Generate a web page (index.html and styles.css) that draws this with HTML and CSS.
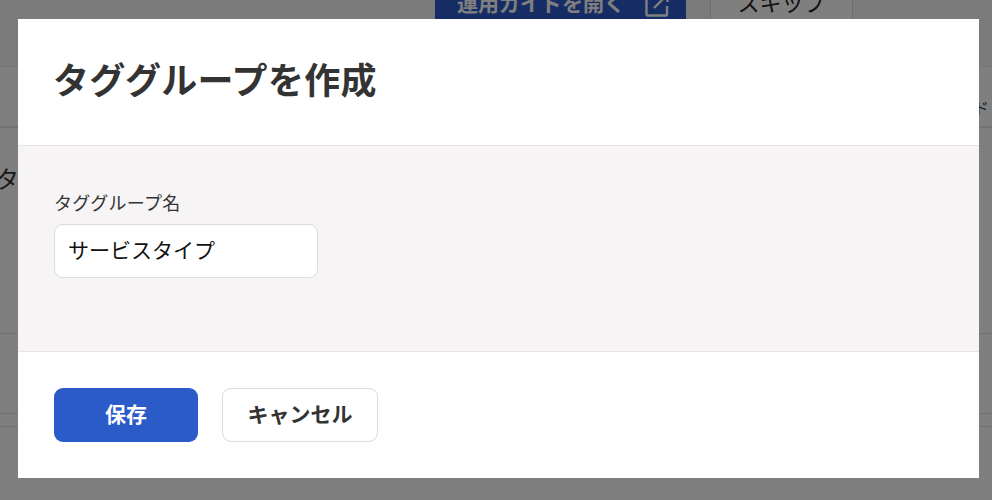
FILE: index.html
```html
<!DOCTYPE html>
<html lang="ja">
<head>
  <meta charset="UTF-8">
  <title>タググループを作成</title>
  <link rel="stylesheet" href="styles.css">
</head>
<body>
  <div class="page">
    <div class="topbar">
      <a class="guide-btn">運用ガイドを開く
        <svg width="24" height="24" viewBox="0 0 24 24" fill="none" stroke="currentColor" stroke-width="2.4">
          <path d="M11 2H2.500a1 1 0 0 0-1 1v18.500a1 1 0 0 0 1 1H21a1 1 0 0 0 1-1V13"/>
          <path d="M9 15 21 3M15 1.500h7.500V9"/>
        </svg>
      </a>
      <a class="skip-btn">スキップ</a>
    </div>
    <div class="tabs"><span class="tabs-end">ド</span></div>
    <div class="row row-first">タ</div>
    <div class="row row-second"></div>
    <div class="row row-third"></div>
  </div>

  <div class="overlay">
    <div class="modal">
      <div class="modal-head">
        <h2>タググループを作成</h2>
      </div>
      <div class="modal-body">
        <label for="groupName">タググループ名</label>
        <input type="text" id="groupName" value="サービスタイプ">
      </div>
      <div class="modal-foot">
        <button class="btn btn-save">保存</button>
        <button class="btn btn-cancel">キャンセル</button>
      </div>
    </div>
  </div>
</body>
</html>
```

FILE: styles.css
```css
* {
  box-sizing: border-box;
}
html, body {
  height: 100%;
}
body {
  margin: 0;
  overflow: hidden;
  background: #fff;
  font-family: "Noto Sans CJK JP", "Noto Sans", sans-serif;
  color: #333;
}
.page {
  height: 500px;
  overflow: hidden;
}
.topbar {
  height: 66px;
  background: #f6f6f6;
  display: flex;
  align-items: flex-end;
  padding: 0 139px 0 435px;
  gap: 24px;
}
.guide-btn {
  width: 251px;
  height: 86px;
  margin-bottom: 20px;
  background: #2a5bc9;
  color: #fff;
  border-radius: 6px;
  font-size: 21px;
  line-height: 30px;
  font-weight: 700;
  display: flex;
  align-items: flex-end;
  justify-content: center;
  gap: 20px;
  padding: 0 0 29px 5px;
}
.skip-btn {
  width: 143px;
  height: 86px;
  margin-bottom: 20px;
  border: 1px solid #ddd;
  border-radius: 6px;
  background: #fff;
  color: #222;
  font-size: 22px;
  line-height: 30px;
  display: flex;
  align-items: flex-end;
  justify-content: center;
  padding-bottom: 29px;
}
.tabs {
  height: 62px;
  background: #fff;
  border-top: 1px solid #eee;
  border-bottom: 2px solid #e4e4e4;
  display: flex;
  align-items: flex-end;
  justify-content: flex-end;
  font-size: 16px;
  line-height: 20px;
  padding: 0 3px 9px 0;
}
.row {
  border-bottom: 1px solid #e4e4e4;
}
.row-first {
  height: 206px;
  padding: 32px 0 0 0;
  margin-left: -5px;
  font-size: 24px;
}
.row-second {
  height: 80px;
}
.row-third {
  height: 13px;
}
.overlay {
  position: fixed;
  inset: 0;
  background: rgba(0, 0, 0, 0.5);
  padding: 19px 13px 22px 18px;
}
.modal {
  height: 459px;
  background: #fff;
  display: flex;
  flex-direction: column;
}
.modal-head {
  height: 127px;
  padding: 33px 35px 0;
  border-bottom: 1px solid #e6e4e4;
}
.modal-head h2 {
  margin: 0;
  font-size: 36px;
  letter-spacing: 0.3px;
  line-height: 52px;
  font-weight: 700;
  color: #333;
}
.modal-body {
  height: 206px;
  padding: 43px 36px 0;
  background: #f6f4f5;
  border-bottom: 1px solid #e6e4e4;
}
.modal-body label {
  display: block;
  font-size: 18px;
  letter-spacing: 0.3px;
  line-height: 26px;
  margin-bottom: 9px;
  color: #333;
}
.modal-body input {
  display: block;
  width: 264px;
  height: 54px;
  padding: 0 13px 5px;
  border: 1px solid #dcdcdc;
  border-radius: 9px;
  background: #fff;
  font-family: inherit;
  font-size: 21px;
  color: #111;
}
.modal-foot {
  flex: 1;
  padding: 36px 36px 0;
  display: flex;
  align-items: flex-start;
  gap: 24px;
}
.btn {
  height: 54px;
  border-radius: 9px;
  font-family: inherit;
  font-size: 21px;
  font-weight: 700;
  padding: 0 0 4px;
}
.btn-save {
  width: 144px;
  background: #2a5bc9;
  border: none;
  color: #fff;
}
.btn-cancel {
  width: 156px;
  background: #fff;
  border: 1px solid #dcdcdc;
  color: #333;
}
```
